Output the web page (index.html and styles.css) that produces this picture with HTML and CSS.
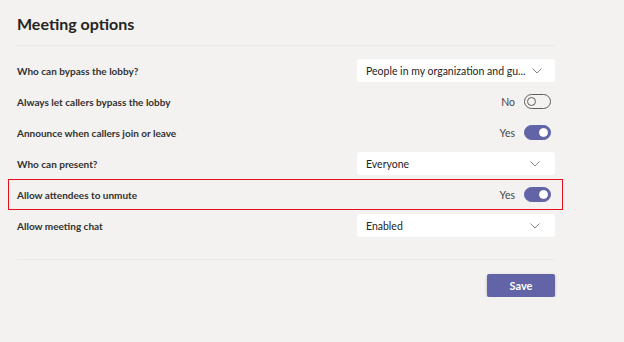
FILE: index.html
```html
<!DOCTYPE html>
<html lang="en">
<head>
    <meta charset="UTF-8">
    <meta name="viewport" content="width=device-width, initial-scale=1.0">
    <title>Meeting options</title>
    <link rel="stylesheet" href="styles.css">
</head>
<body>

    <div class="options">
        <h1>Meeting options</h1>

        <div class="rows">
            <div class="row">
                <span class="label">Who can bypass the lobby?</span>
                <div class="dropdown">
                    <span class="value">People in my organization and gu...</span>
                    <svg class="chevron" width="10" height="6" viewBox="0 0 10 6"><path d="M0.5 0.5 L5 5 L9.5 0.5" fill="none" stroke="#8a8886" stroke-width="1"/></svg>
                </div>
            </div>

            <div class="row">
                <span class="label">Always let callers bypass the lobby</span>
                <div class="switch-wrap">
                    <span class="state">No</span>
                    <span class="switch"><span class="knob"></span></span>
                </div>
            </div>

            <div class="row">
                <span class="label">Announce when callers join or leave</span>
                <div class="switch-wrap">
                    <span class="state">Yes</span>
                    <span class="switch on"><span class="knob"></span></span>
                </div>
            </div>

            <div class="row">
                <span class="label">Who can present?</span>
                <div class="dropdown">
                    <span class="value">Everyone</span>
                    <svg class="chevron" width="10" height="6" viewBox="0 0 10 6"><path d="M0.5 0.5 L5 5 L9.5 0.5" fill="none" stroke="#8a8886" stroke-width="1"/></svg>
                </div>
            </div>

            <div class="row highlight">
                <span class="label">Allow attendees to unmute</span>
                <div class="switch-wrap">
                    <span class="state">Yes</span>
                    <span class="switch on"><span class="knob"></span></span>
                </div>
            </div>

            <div class="row">
                <span class="label">Allow meeting chat</span>
                <div class="dropdown">
                    <span class="value">Enabled</span>
                    <svg class="chevron" width="10" height="6" viewBox="0 0 10 6"><path d="M0.5 0.5 L5 5 L9.5 0.5" fill="none" stroke="#8a8886" stroke-width="1"/></svg>
                </div>
            </div>
        </div>

        <div class="footer">
            <button class="save">Save</button>
        </div>
    </div>

</body>
</html>
```

FILE: styles.css
```css
body {
    margin: 0;
    background: #f3f2f1;
    font-family: 'Lato', 'Open Sans', sans-serif;
    color: #252423;
}

.options {
    width: 555px;
    margin-left: 8px;
    padding-top: 13px;
}

h1 {
    margin: 0 8px 0 9px;
    padding-bottom: 10px;
    font-size: 16px;
    line-height: 22px;
    font-weight: 700;
    border-bottom: 1px solid #ebe9e7;
}

.rows {
    padding: 9px 0 18px;
    margin: 0 8px 0 9px;
    border-bottom: 1px solid #ebe9e7;
}

.row {
    height: 31px;
    display: flex;
    align-items: center;
    justify-content: space-between;
    box-sizing: border-box;
}

.row.highlight {
    margin: 0 -8px 0 -9px;
    padding: 0 7px 0 8px;
    border: 1px solid #e3101c;
}

.label {
    font-size: 10px;
    font-weight: 700;
    color: #323130;
}

.dropdown {
    width: 198px;
    height: 23px;
    box-sizing: border-box;
    background: #fff;
    border-radius: 3px;
    padding: 0 15px 0 9px;
    display: flex;
    align-items: center;
    justify-content: space-between;
    gap: 6px;
    font-size: 10.5px;
}

.value {
    white-space: nowrap;
}

.chevron {
    display: block;
    flex-shrink: 0;
}

.switch-wrap {
    display: flex;
    align-items: center;
    gap: 9px;
    margin-right: 4px;
}

.state {
    font-size: 10.5px;
    color: #484644;
}

.switch {
    width: 27px;
    height: 15px;
    box-sizing: border-box;
    border: 1px solid #605e5c;
    border-radius: 8px;
    display: flex;
    align-items: center;
    padding: 0 2px;
}

.switch .knob {
    width: 9px;
    height: 9px;
    box-sizing: border-box;
    border: 1px solid #605e5c;
    border-radius: 50%;
}

.switch.on {
    background: #6264a7;
    border-color: #6264a7;
    justify-content: flex-end;
}

.switch.on .knob {
    background: #fff;
    border-color: #fff;
}

.footer {
    display: flex;
    justify-content: flex-end;
    padding: 14px 8px 0 0;
}

.save {
    width: 68px;
    height: 23px;
    border: none;
    border-radius: 2px;
    background: #6264a7;
    color: #fff;
    font-family: inherit;
    font-size: 11px;
    font-weight: 700;
    box-shadow: 0 1px 3px rgba(0, 0, 0, 0.25);
}
```
